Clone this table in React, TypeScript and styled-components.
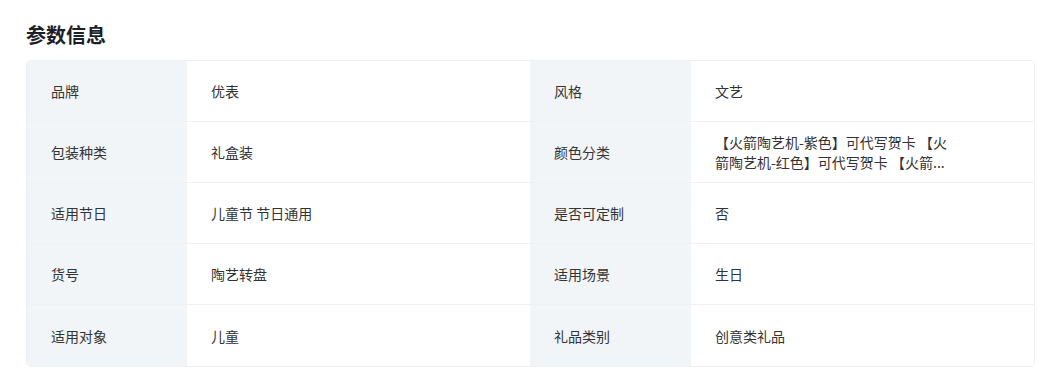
import styled, { createGlobalStyle } from "styled-components";

interface Spec {
    label: string,
    value: string
}

const specs: Spec[][] = [
    [{ label: '品牌', value: '优表' }, { label: '风格', value: '文艺' }],
    [{ label: '包装种类', value: '礼盒装' }, { label: '颜色分类', value: '【火箭陶艺机-紫色】可代写贺卡 【火箭陶艺机-红色】可代写贺卡 【火箭...' }],
    [{ label: '适用节日', value: '儿童节 节日通用' }, { label: '是否可定制', value: '否' }],
    [{ label: '货号', value: '陶艺转盘' }, { label: '适用场景', value: '生日' }],
    [{ label: '适用对象', value: '儿童' }, { label: '礼品类别', value: '创意类礼品' }],
]

const GlobalStyle = createGlobalStyle`
    body {
        margin: 0;
        background: #ffffff;
        font-family: "Noto Sans CJK SC", "Noto Sans", sans-serif;
        color: #333333;
    }
`

const Section = styled.section`
    padding: 22px 19px 0 26px;
`

const Title = styled.h2`
    margin: 0 0 12px;
    font-size: 20px;
    line-height: 26px;
    font-weight: 700;
    color: #1c1f2a;
`

const Table = styled.div`
    width: 1007px;
    border: 1px solid #f0f0f0;
    border-radius: 5px;
    overflow: hidden;
`

const Row = styled.div<{ $last: boolean }>`
    display: grid;
    grid-template-columns: 160px 1fr 161px 1fr;
    height: 61px;
    border-bottom: ${p => (p.$last ? 'none' : '1px solid #f0f0f0')};
    box-sizing: border-box;
`

const Label = styled.div`
    display: flex;
    align-items: center;
    padding-left: 24px;
    background: #f2f5f8;
    font-size: 14px;
    color: #333333;
`

const Value = styled.div`
    display: flex;
    align-items: center;
    padding-left: 24px;
    background: #ffffff;
    font-size: 14px;
    color: #333333;
`

const ValueText = styled.span`
    max-width: 244px;
    line-height: 20px;
`

const App = () => {
    return (
        <>
            <GlobalStyle />
            <Section>
                <Title>参数信息</Title>
                <Table>
                    {specs.map((row, idx) => (
                        <Row key={idx} $last={idx === specs.length - 1}>
                            {row.map(item => [
                                <Label key={item.label}>{item.label}</Label>,
                                <Value key={item.label + '-v'}>
                                    <ValueText>{item.value}</ValueText>
                                </Value>
                            ])}
                        </Row>
                    ))}
                </Table>
            </Section>
        </>
    )
}

export default App
